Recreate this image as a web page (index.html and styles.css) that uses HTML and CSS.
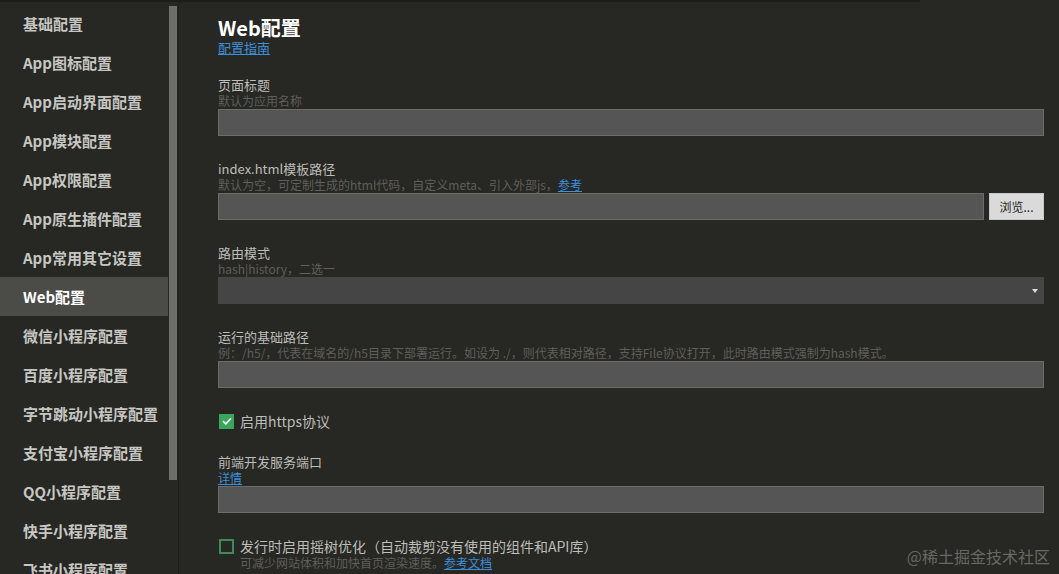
FILE: index.html
```html
<!DOCTYPE html>
<html lang="zh-CN">
<head>
<meta charset="utf-8">
<title>Web配置</title>
<link rel="stylesheet" href="styles.css">
</head>
<body>
<div class="topline"></div>
<div class="app">
  <nav class="sidebar">
    <div class="nav-item">基础配置</div>
    <div class="nav-item">App图标配置</div>
    <div class="nav-item">App启动界面配置</div>
    <div class="nav-item">App模块配置</div>
    <div class="nav-item">App权限配置</div>
    <div class="nav-item">App原生插件配置</div>
    <div class="nav-item">App常用其它设置</div>
    <div class="nav-item active">Web配置</div>
    <div class="nav-item">微信小程序配置</div>
    <div class="nav-item">百度小程序配置</div>
    <div class="nav-item">字节跳动小程序配置</div>
    <div class="nav-item">支付宝小程序配置</div>
    <div class="nav-item">QQ小程序配置</div>
    <div class="nav-item">快手小程序配置</div>
    <div class="nav-item">飞书小程序配置</div>
  </nav>
  <div class="scroll-track"><div class="scroll-thumb"></div></div>
  <div class="divider"></div>
  <main class="content">
    <h1 class="title">Web配置</h1>
    <a class="link guide" href="#">配置指南</a>

    <div class="field">
      <div class="label">页面标题</div>
      <div class="hint">默认为应用名称</div>
      <div class="input"></div>
    </div>

    <div class="field">
      <div class="label">index.html模板路径</div>
      <div class="hint">默认为空，可定制生成的html代码，自定义meta、引入外部js，<a class="link" href="#">参考</a></div>
      <div class="row">
        <div class="input grow"></div>
        <button class="browse">浏览...</button>
      </div>
    </div>

    <div class="field">
      <div class="label">路由模式</div>
      <div class="hint">hash|history，二选一</div>
      <div class="select"><span class="arrow"></span></div>
    </div>

    <div class="field">
      <div class="label">运行的基础路径</div>
      <div class="hint">例：/h5/，代表在域名的/h5目录下部署运行。如设为 ./，则代表相对路径，支持File协议打开，此时路由模式强制为hash模式。</div>
      <div class="input"></div>
    </div>

    <label class="check-row">
      <span class="checkbox checked">
        <svg width="10" height="8" viewBox="0 0 10 8"><path d="M1 4.2 L3.8 6.8 L9 1.2" fill="none" stroke="#fff" stroke-width="1.6"/></svg>
      </span>
      <span class="check-label">启用https协议</span>
    </label>

    <div class="field">
      <div class="label">前端开发服务端口</div>
      <div class="hint"><a class="link" href="#">详情</a></div>
      <div class="input"></div>
    </div>

    <div class="check-block">
      <label class="check-row tight">
        <span class="checkbox"></span>
        <span class="check-label">发行时启用摇树优化（自动裁剪没有使用的组件和API库）</span>
      </label>
      <div class="check-sub">可减少网站体积和加快首页渲染速度。<a class="link" href="#">参考文档</a></div>
    </div>
  </main>
</div>
<div class="watermark">@稀土掘金技术社区</div>
</body>
</html>
```

FILE: styles.css
```css
html, body {
  margin: 0;
  padding: 0;
  height: 574px;
  overflow: hidden;
  background: #272723;
  font-family: "Noto Sans CJK SC", "Noto Sans", sans-serif;
}

.topline {
  height: 2px;
  width: 920px;
  background: #1c1c19;
}

.app {
  display: flex;
  height: 572px;
}

.sidebar {
  width: 168px;
  flex: none;
  padding-top: 2px;
  background: #272723;
}

.nav-item {
  height: 39px;
  line-height: 39px;
  padding-left: 23px;
  font-size: 15px;
  font-weight: bold;
  color: #c6c6c2;
  white-space: nowrap;
}

.nav-item.active {
  background: #4b4b47;
  color: #ffffff;
}

.scroll-track {
  width: 10px;
  flex: none;
  background: #272723;
}

.scroll-thumb {
  margin-top: 4px;
  margin-left: 1px;
  width: 8px;
  height: 474px;
  background: #6d6d69;
}

.divider {
  width: 1px;
  flex: none;
  background: #1e1e1b;
}

.content {
  flex: 1;
  padding: 14px 15px 0 39px;
  min-width: 0;
}

.title {
  margin: 0;
  font-size: 20px;
  line-height: 24px;
  font-weight: bold;
  color: #ffffff;
}

.link {
  color: #3d8fdc;
  text-decoration: underline;
}

.guide {
  display: block;
  width: max-content;
  font-size: 13px;
  line-height: 15px;
  margin-bottom: 22px;
}

.field {
  margin-bottom: 25px;
}

.label {
  font-size: 13px;
  line-height: 16px;
  color: #bdbdb9;
}

.hint {
  font-size: 12px;
  line-height: 16px;
  color: #5f5f5b;
  white-space: nowrap;
}

.hint .link {
  font-size: 12px;
}

.input {
  box-sizing: border-box;
  height: 27px;
  background: #555555;
  border: 1px solid #6c6c6a;
}

.row {
  display: flex;
  gap: 5px;
}

.grow {
  flex: 1;
}

.browse {
  width: 55px;
  height: 27px;
  flex: none;
  border: 1px solid #c8c8c8;
  background: #dadada;
  color: #222222;
  font-family: "Noto Sans CJK SC", sans-serif;
  font-size: 12px;
  padding: 0;
}

.select {
  height: 27px;
  background: #454545;
  display: flex;
  align-items: center;
  justify-content: flex-end;
  padding-right: 6px;
}

.arrow {
  width: 0;
  height: 0;
  border-left: 3px solid transparent;
  border-right: 3px solid transparent;
  border-top: 4px solid #dcdcdc;
}

.check-row {
  display: flex;
  align-items: center;
  gap: 6px;
  height: 16px;
  margin: 0 0 25px 1px;
}

.check-row.tight {
  margin-bottom: 0;
}

.checkbox {
  box-sizing: border-box;
  width: 15px;
  height: 15px;
  flex: none;
  border: 2px solid #3d8a5a;
  display: flex;
  align-items: center;
  justify-content: center;
}

.checkbox.checked {
  background: #3aa55c;
  border-color: #3aa55c;
}

.check-label {
  font-size: 14px;
  line-height: 16px;
  color: #bdbdb9;
  white-space: nowrap;
}

.check-block {
  margin-top: 0;
}

.check-sub {
  padding-left: 22px;
  font-size: 12px;
  line-height: 17px;
  color: #5f5f5b;
}

.watermark {
  position: absolute;
  right: 9px;
  bottom: 8px;
  font-size: 16px;
  line-height: 20px;
  color: #686864;
}
```
